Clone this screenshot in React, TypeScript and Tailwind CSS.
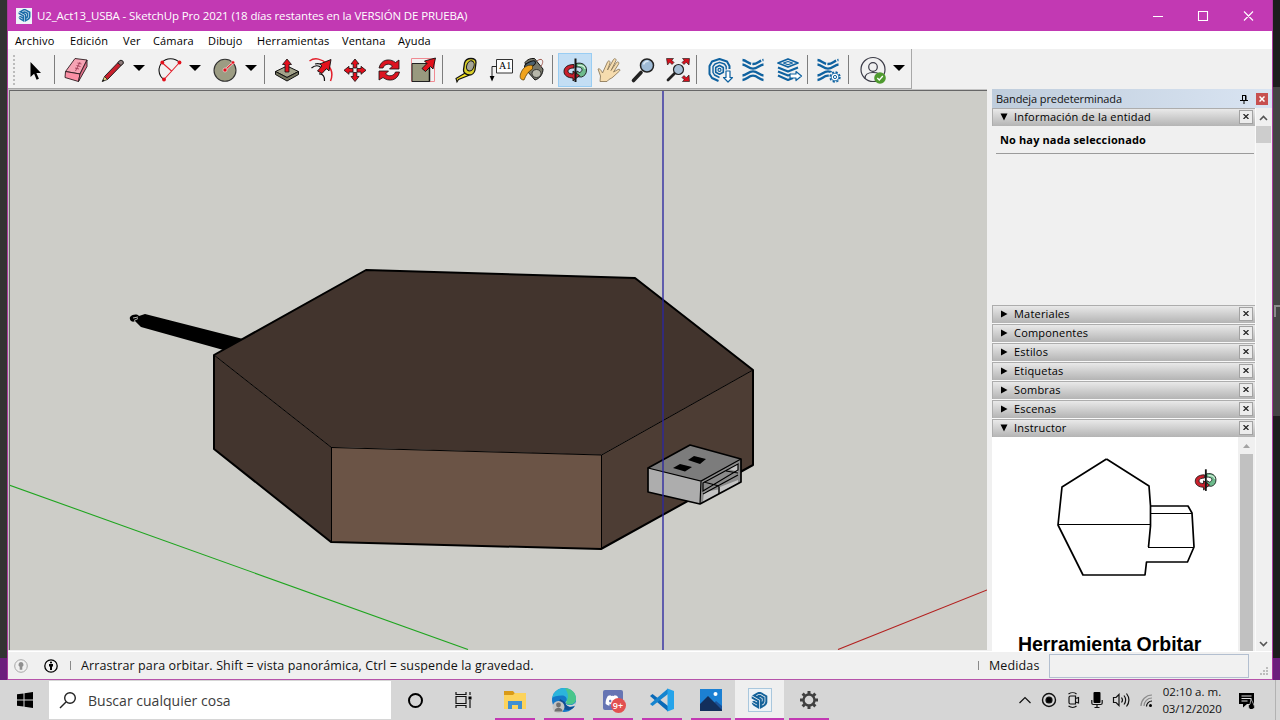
import type { ReactNode } from "react";
import { SiSketchup } from "react-icons/si";
import { FaDiscord } from "react-icons/fa";

type IconProps = { children: ReactNode; className?: string };

const Svg28 = ({ children, className = "" }: IconProps) => (
  <svg viewBox="0 0 28 28" fill="none" className={`h-7 w-7 shrink-0 ${className}`}>
    {children}
  </svg>
);

const Slot = ({ children, className }: { children?: ReactNode; className: string }) => (
  <div className={`flex h-[34px] shrink-0 items-center justify-center ${className}`}>{children}</div>
);

const Sep = ({ className }: { className: string }) => (
  <div className={`flex shrink-0 justify-center ${className}`}>
    <div className="h-[29px] w-px shrink-0 bg-[#7d7d7d]" />
  </div>
);

const Drop = () => (
  <Slot className="w-3.5 pb-1">
    <svg viewBox="0 0 12 6" className="h-[6px] w-3 shrink-0">
      <path d="M0 0h12L6 6z" />
    </svg>
  </Slot>
);

const OrbitArt = () => (
  <g stroke="#151515" strokeWidth=".9" strokeLinejoin="round">
    <path d="M15 7.500C21 6 25.500 9 25.500 14c0 4-2 6-5 7l-5.500-.5 1-5.500 2.500 1.500c1.500-.5 2.500-1.500 2.500-2.800 0-2-2.500-3-6-2.700z" fill="#6dbb8c" />
    <path d="M17 9.500c4-.5 7 1 7 3.500" stroke="#d3efdc" strokeWidth="1.200" />
    <path d="M13 8.500C7 8.500 3 11 3 15.500 3 19.500 7 22 12 22v3l6.500-5.500L12 15v3c-3 0-5-1-5-2.800S9 12 13 12z" fill="#c9202c" />
    <path d="M14.500 2.500v23.500" strokeWidth="2" />
  </g>
);

const ConvergeLines = () => (
  <g stroke="#0f62a0" strokeWidth="2.300">
    <path d="M3.500 4c4 .3 6 4 10.500 4s6.500-3.700 10.500-4" strokeDasharray="9.500 1.300" />
    <path d="M3.500 8.500c4 .3 6 4.200 10.500 4.200s6.500-3.900 10.500-4.200" />
    <path d="M3.500 19.500c4-.3 6-4.200 10.500-4.200s6.500 3.900 10.500 4.200" />
    <path d="M3.500 24c4-.3 6-4.300 10.500-4.300s6.500 4 10.500 4.300" />
  </g>
);

const Toolbar = () => (
  <div className="flex h-[40px] w-[904px] shrink-0 items-center border-r border-b border-[#a8a8a8] bg-[#f1f1f1] pt-[2px]">
    <Slot className="w-3 !justify-start pl-[5px]">
      <div className="h-[30px] w-0 border-l-2 border-dotted border-[#bcbcbc]" />
    </Slot>
    <Slot className="w-[30px]">
      <Svg28>
        <path d="M9.500 6v15l3.600-3.300 2.500 6 2.300-1-2.500-5.700h4.600z" fill="#000" />
      </Svg28>
    </Slot>
    <Sep className="w-2" />
    <Slot className="w-9">
      <Svg28>
        <g stroke="#2b1b1f" strokeWidth=".9" strokeLinejoin="round">
          <path d="M13 2.500l12 1.500-7 14-14.500-2.500z" fill="#f7a3b4" />
          <path d="M3.500 15.500L18 18l-1.500 7.500L3 21.500z" fill="#fb8fa5" />
          <path d="M25 4v6.500l-8.500 15L18 18z" fill="#e0718a" />
        </g>
        <path d="M18 6l-4.500 9M15.500 7l4 1M14.500 9.500l4 1M13 12l4 1" stroke="#a04058" strokeWidth=".9" />
      </Svg28>
    </Slot>
    <Slot className="w-[38px]">
      <Svg28>
        <path d="M5.500 20.500L20.500 5c1.500-1.500 4.500 0 3.500 2.500L8.500 23.500z" fill="#c9202c" stroke="#222" />
        <path d="M18.700 6.800L20.500 5c1.500-1.500 4.500 0 3.500 2.500L22 9.600z" fill="#8d7a7a" stroke="#222" />
        <path d="M5.500 20.500l3 3-5.300 2z" fill="#e9d37e" stroke="#222" strokeWidth=".8" />
        <path d="M3 25.800l2.700-1-1.500-1.500z" fill="#111" />
      </Svg28>
    </Slot>
    <Drop />
    <Slot className="w-[42px] pl-[6px]">
      <Svg28>
        <path d="M8 23.500C1.500 19 2 11 6 6.500C10 1.500 19 1.500 23.500 6.500" stroke="#111" strokeWidth="1.100" />
        <path d="M6 6.500l9.500 8.500M23.500 6.500L8 23.500" stroke="#e3202c" strokeWidth="1.100" />
        <g fill="#e3101c">
          <circle cx="6.300" cy="6.500" r="1.900" />
          <circle cx="23.500" cy="6.500" r="1.900" />
          <circle cx="8" cy="23.500" r="1.900" />
        </g>
      </Svg28>
    </Slot>
    <Drop />
    <Slot className="w-[42px] pl-[4px]">
      <Svg28>
        <circle cx="14" cy="14.300" r="11" fill="#9c9c83" stroke="#333" strokeWidth="1.100" />
        <path d="M14 14l8-7.500" stroke="#fff" strokeWidth="2.200" />
        <path d="M14 14l8-7.500" stroke="#e3202c" strokeWidth="1.200" />
        <g fill="#e3101c" stroke="#fff" strokeWidth=".5">
          <circle cx="14" cy="14" r="2" />
          <circle cx="22" cy="6.500" r="1.700" />
        </g>
      </Svg28>
    </Slot>
    <Drop />
    <Sep className="w-3" />
    <Slot className="w-[34px]">
      <Svg28>
        <g stroke="#111" strokeLinejoin="round">
          <path d="M2.500 15.500L14 10l11.500 5.500L14 21.500z" fill="#a3a38a" />
          <path d="M2.500 15.500v3L14 25l11.500-6.500v-3L14 21.500z" fill="#77775f" />
          <path d="M12 16V8.500H9.500L14 3l4.500 5.500H16V16z" fill="#e3101c" strokeWidth=".8" />
        </g>
      </Svg28>
    </Slot>
    <Slot className="w-[34px]">
      <Svg28>
        <path d="M2.500 5C8 1 15 3 20 8c5 5 6 11 3.500 17" stroke="#e3202c" strokeWidth="1.500" />
        <path d="M4.500 12c3-2.500 7-3 9.500-.5M12 18c4-.5 6 3 5.500 7M8 8c5-1 9 1 11 6" stroke="#111" strokeWidth="1.200" />
        <path d="M10.500 15l4.500-5-2.200-2L24 3.500l-2 11.500-2.500-2.500-4.500 5z" fill="#e3101c" stroke="#111" strokeWidth=".9" />
      </Svg28>
    </Slot>
    <Slot className="w-[34px]">
      <Svg28>
        <g fill="#e3101c" stroke="#111" strokeWidth=".8" strokeLinejoin="round">
          <path d="M14 3l4 5h-2.200v4h-3.600V8H10z" />
          <path d="M14 25.500l4-5h-2.200v-4h-3.600v4H10z" />
          <path d="M3 14.300l5-4v2.200h4v3.600H8v2.200z" />
          <path d="M25 14.300l-5-4v2.200h-4v3.600h4v2.200z" />
        </g>
      </Svg28>
    </Slot>
    <Slot className="w-[34px]">
      <Svg28>
        <g fill="#dc1420" stroke="#111" strokeWidth=".8" strokeLinejoin="round">
          <path d="M4 12C6 3 15 2 20.500 6.500L24 4v9h-9.500l3-3C14 7 9.500 8 8 12z" />
          <path d="M24.500 16c-2 9-11 10-16.500 5.500L4 24v-9h9.500l-3 3c3.500 3 8.500 2 10-2z" />
        </g>
      </Svg28>
    </Slot>
    <Slot className="w-[34px]">
      <Svg28>
        <path d="M2.500 2.500h23v23h-23z" stroke="#f08a92" />
        <path d="M3 7.500h17.500v18H3z" fill="#99997f" stroke="#222" />
        <path d="M20.500 8v17.500" stroke="#111" strokeWidth="1.500" />
        <path d="M13 12.500l5-5-2.500-2.500L26.500 2l-2.500 11-2.500-2.500-5 5z" fill="#e3101c" stroke="#111" strokeWidth=".9" />
      </Svg28>
    </Slot>
    <Sep className="w-1" />
    <Slot className="w-[44px]">
      <Svg28>
        <path d="M4 22.500l10-6 2.500 3-10 4L5 26z" fill="#f5e21f" stroke="#111" strokeWidth="1.100" />
        <path d="M12.500 7c1-3.500 3.500-4.500 6.500-4.500s5 1 5 4L23 14c-.5 3-3 5-5.500 5S11 17 11.500 14z" fill="#d9cf2a" stroke="#111" strokeWidth="1.300" />
        <ellipse cx="18.300" cy="9.800" rx="3.600" ry="5.200" transform="rotate(20 18 10)" fill="#a5a596" stroke="#111" />
      </Svg28>
    </Slot>
    <Slot className="w-[26px]">
      <div className="relative h-7 w-7 shrink-0">
        <svg viewBox="0 0 28 28" fill="none" className="h-7 w-7">
          <path d="M9.500 3.500h16v13.500h-16z" fill="#fdfdfd" stroke="#333" />
          <path d="M9.500 10.500H5v10" stroke="#222" />
          <path d="M2.700 20h4.800L5 25.500z" fill="#000" />
        </svg>
        <span className="absolute top-[4px] left-[12px] font-['Liberation_Serif',serif] text-[10px] leading-[12px] text-black">A1</span>
      </div>
    </Slot>
    <Slot className="w-9">
      <Svg28>
        <path d="M7 6.500c2-3 6-4.500 9.500-4L25 13c0 5-3 9.500-8 11L9 15z" fill="#77776a" stroke="#111" />
        <ellipse cx="12" cy="8.500" rx="2.600" ry="6" transform="rotate(62 12 8.500)" fill="#4c6170" stroke="#111" />
        <path d="M14.500 9.500C9 8 4.500 12 2.500 18c-1 3.500 0 6 3.500 6 2-5 4.500-9 8.500-11z" fill="#f0a31e" stroke="#4a3200" strokeWidth=".7" />
        <path d="M19 5c5-4 8 0 3.500 6" stroke="#a05a50" />
        <ellipse cx="18.500" cy="17.500" rx="4.500" ry="4" fill="#b7b7aa" stroke="#222" strokeWidth=".8" />
      </Svg28>
    </Slot>
    <Sep className="w-1" />
    <Slot className="ml-1 w-[34px] border border-[#99cdf3] bg-[#c3def4]">
      <Svg28>
        <OrbitArt />
      </Svg28>
    </Slot>
    <Slot className="w-[34px]">
      <Svg28>
        <path
          d="M5 25.500l.5-5.500-2.500-7c1.500-1 3.500 1.500 4.500 4l5-11c1-2 3-1 2.500 1L12.500 14l6-10.500c1-1.700 3-.5 2.500 1L16 14.500l5.500-8c1.500-1.500 3 0 2 1.700L18.500 16l4.500-2.500c1.500-1 2.500.5 1.500 1.500L18 21c-2 2-4 1.500-6 4.500z"
          fill="#f6dcae"
          stroke="#8f7c5c"
          strokeWidth=".9"
        />
      </Svg28>
    </Slot>
    <Slot className="w-[34px]">
      <Svg28>
        <path d="M4.500 24.500L12 16.500" stroke="#222" strokeWidth="3.600" strokeLinecap="round" />
        <circle cx="18" cy="9.500" r="6.500" fill="#9fbbd6" stroke="#222" strokeWidth="1.500" />
        <path d="M14.500 8.500c1-2.500 3-3.500 5-3" stroke="#dbe8f4" strokeWidth="1.500" />
      </Svg28>
    </Slot>
    <Slot className="w-[34px] pl-0.5">
      <Svg28>
        <path d="M4 24l6.500-6.500" stroke="#222" strokeWidth="2.800" strokeLinecap="round" />
        <circle cx="14.500" cy="13.500" r="5" fill="#a6bfd6" stroke="#222" strokeWidth="1.200" />
        <g fill="#d5121e" stroke="#111" strokeWidth=".6">
          <path d="M2.500 2.500h7L7.800 4.300 10 6.500 8 8.500 5.800 6.300 3.500 9z" />
          <path d="M25.500 2.500h-7l1.700 1.800L18 6.500l2 2 2.200-2.200L25 9z" />
          <path d="M25.500 25.500h-7l1.700-1.800-2.200-2.200 2-2 2.200 2.200L25 19z" />
        </g>
      </Svg28>
    </Slot>
    <Sep className="w-1" />
    <Slot className="w-[39px] pl-[5px]">
      <Svg28>
        <g stroke="#0f62a0" strokeLinejoin="round">
          <path d="M12.500 25L6 22 3.500 18v-8L6 5.500 13.500 3l7.500 2.500 2.500 4.500v3" strokeWidth="2" />
          <path d="M13.500 21.500L8.500 19 7 16.500v-6L9 8l4.500-1.700L18.500 8l1.700 2.500v3" strokeWidth="1.400" />
          <path d="M13.500 9.500l3.800 2v4.800l-3.800 2-3.800-2v-4.800z" strokeWidth="1.600" />
          <circle cx="13.500" cy="13.900" r="1.500" strokeWidth="1.200" />
          <path d="M20 15h4v6.500h2.500L22 26l-4.500-4.500H20z" fill="#fff" strokeWidth="1.200" />
        </g>
      </Svg28>
    </Slot>
    <Slot className="w-8">
      <Svg28>
        <ConvergeLines />
      </Svg28>
    </Slot>
    <Slot className="w-9 pl-[4px]">
      <Svg28>
        <g stroke="#0f62a0" strokeLinejoin="round">
          <path d="M3 7L13 3l10 4-10 4z" strokeWidth="1.800" />
          <path d="M8.500 7l4.500-1.500L17.500 7 13 8.700z" strokeWidth="1.200" />
          <path d="M3 11.500l10 4 10-4M3 15.500l10 4 3-1M3 19.500l10 4.500 5-2" strokeWidth="2" />
          <path d="M15 18h6v-2.500l5.500 4.500-5.500 4.500V22h-6z" fill="#fff" strokeWidth="1.200" />
        </g>
      </Svg28>
    </Slot>
    <Sep className="w-1" />
    <Slot className="w-[38px] pl-0.5">
      <Svg28>
        <g transform="translate(-1 0)">
          <ConvergeLines />
        </g>
        <circle cx="20" cy="21" r="6.300" fill="#f1f1f1" />
        <circle cx="20" cy="21" r="4.900" fill="#fff" stroke="#0f62a0" strokeWidth="1.600" strokeDasharray="2.200 1.650" />
        <circle cx="20" cy="21" r="3.900" fill="#fff" stroke="#0f62a0" strokeWidth=".9" />
        <circle cx="20" cy="21" r="1.600" fill="#fff" stroke="#0f62a0" strokeWidth="1" />
      </Svg28>
    </Slot>
    <Sep className="w-0.5" />
    <Slot className="w-[43px] pl-[4px]">
      <Svg28>
        <g stroke="#3c3c48" strokeWidth="1.200">
          <circle cx="14" cy="13.500" r="12" />
          <circle cx="14" cy="11" r="4.300" />
          <path d="M6 22.500c0-4 3-6 8-6s8 2 8 5" />
        </g>
        <circle cx="21" cy="22" r="5.800" fill="#4f9a2f" />
        <path d="M18.300 22l2 2 3.500-4" stroke="#fff" strokeWidth="1.300" />
      </Svg28>
    </Slot>
    <Drop />
  </div>
);

const Viewport = () => (
  <div className="h-[561px] w-[979px] shrink-0 bg-[#c4c4c4] pt-px pl-px">
    <div className="h-[560px] w-[978px] border-t border-l border-[#676767] bg-[#cdcdc8]">
      <svg viewBox="10 91 977 559" preserveAspectRatio="none" className="block h-[559px] w-[977px]" fill="none">
        <path d="M9 485L468 649.500" stroke="#1fa51f" strokeWidth="1.100" />
        <path d="M838 649.500L987 590" stroke="#b3201f" strokeWidth="1.100" />
        <path d="M145 314l98 25-16 12-86-24-6-6c-3 2-6-1-5-4 3-3 7-3 9-1z" fill="#000" />
        <path d="M133 318l5-1M134 320.500l4-2" stroke="#cdcdc8" strokeWidth=".9" />
        <path d="M214 355L331 447V542L214 449z" fill="#43352e" />
        <path d="M331 447L601 455V549L331 542z" fill="#6b5446" />
        <path d="M601 455L753 370V465L601 549z" fill="#4d3d34" />
        <path d="M366 270L635 278L753 370L601 455L331 447L214 355z" fill="#42342d" />
        <path d="M214 355L331.500 447.500L601.500 455L753 370M331.500 447V542M601.500 455V549" stroke="#000" strokeWidth="1" />
        <path d="M366 270L635 278L753 370V465L601 549L331 542L214 449V355z" stroke="#000" strokeWidth="2" strokeLinejoin="round" />
        <path d="M648 468L690 445L741 459L701 481z" fill="#7c7c7c" />
        <path d="M648 468L701 481L700 504L648 492z" fill="#adadad" />
        <path d="M701 481L741 459V482L700 504z" fill="#8b8b8b" />
        <path d="M704 492l14-2.500V496l-15 6zM720 487l18-7v3.500l-18 9zM728 469l10-6v8.500z" fill="#c4c4c4" />
        <path d="M673 468l7-4 12 3-7 4.500zM688 460l6-4 12 3-6 5z" fill="#000" />
        <path d="M648 468L701 481L741 459M701 481L700 504" stroke="#000" strokeWidth="1.200" />
        <path d="M703 483L738 464V470L703 491zM703 494L738 475M719 486.500V494M726 471L738 473M704 482l15 4" stroke="#000" strokeWidth="1.200" />
        <path d="M648 468L690 445L741 459V482L700 504L648 492z" stroke="#000" strokeWidth="1.700" strokeLinejoin="round" />
        <path d="M663 90V650" stroke="#2b27a0" strokeWidth="1.600" opacity=".85" />
      </svg>
    </div>
  </div>
);

const CloseBox = () => (
  <div className="mr-[2px] flex h-3.5 w-3.5 items-center justify-center border border-[#a2a2a2] bg-[#ececec]">
    <svg viewBox="0 0 6 5" className="h-[5px] w-[6px]" stroke="#222" strokeWidth="1.200">
      <path d="M.5 0l5 5M5.500 0l-5 5" />
    </svg>
  </div>
);

const PanelHeader = ({ title, open = false }: { title: string; open?: boolean }) => (
  <div className="flex h-[18px] shrink-0 items-center border-t border-l border-[#adadad] bg-linear-to-b from-[#e9e9e9] to-[#b4b4b4] pb-[2px]">
    <svg viewBox="0 0 8 8" className="ml-[7px] h-2 w-2">
      {open ? <path d="M.5 .5h7L4 7.500z" /> : <path d="M1 .5v7L7.500 4z" />}
    </svg>
    <span className="ml-1.5 flex-1 font-['Open_Sans',sans-serif] text-[11px] leading-4 tracking-[0.2px] text-black">{title}</span>
    <CloseBox />
  </div>
);

const closedPanels = ["Materiales", "Componentes", "Estilos", "Etiquetas", "Sombras", "Escenas"];

const Tray = () => (
  <div className="ml-[5px] flex h-[563px] w-[280px] shrink-0 flex-col">
    <div className="flex h-[19px] shrink-0 items-center bg-linear-to-r from-[#bfcddc] to-[#d9e4f2] pt-px pl-1">
      <span className="flex-1 font-['Open_Sans',sans-serif] text-[11px] tracking-[-0.1px] text-[#111]">Bandeja predeterminada</span>
      <svg viewBox="0 0 8 9" className="mr-[8px] h-[9px] w-2" fill="none" stroke="#000">
        <path d="M2 .5h4v5M2.500 .5v5M5.500 .5v5M0 5.500h8M4 5.500V9" />
      </svg>
      <div className="mr-[4px] flex h-3 w-3 items-center justify-center bg-[#c75050]">
        <svg viewBox="0 0 6 6" className="h-1.5 w-1.5" stroke="#fff" strokeWidth="1.500">
          <path d="M.5 .5l5 5M5.500 .5l-5 5" />
        </svg>
      </div>
    </div>
    <div className="flex h-[544px] shrink-0">
      <div className="flex w-[263px] shrink-0 flex-col">
        <PanelHeader title="Información de la entidad" open />
        <div className="h-[179px] shrink-0 px-1">
          <div className="h-7 w-[258px] border-b border-[#9b9b9b] pt-1.5 pl-1 font-['Open_Sans',sans-serif] text-[11px] leading-4 font-bold tracking-[0.13px] whitespace-nowrap text-black">
            No hay nada seleccionado
          </div>
        </div>
        <div className="flex flex-col gap-px bg-[#f8f8f8]">
          {closedPanels.map((title) => (
            <PanelHeader key={title} title={title} />
          ))}
          <PanelHeader title="Instructor" open />
        </div>
        <div className="flex h-[215px] shrink-0 overflow-hidden">
          <div className="flex w-[246px] flex-col bg-white">
            <svg viewBox="992 437 246 199" className="h-[199px] w-[246px] shrink-0" fill="none" stroke="#000">
              <path
                d="M1106.500 459L1149 486l1.500 20v20l-2 21M1106.500 459L1062 487l-4 38 25 50h62l1.500-13h41l6.500-15-2-34-4-7h-37.500"
                strokeWidth="1.700"
                strokeLinejoin="round"
              />
              <path d="M1058 524.500h92M1150 513.500h42M1148 547.500h46" />
              <g transform="translate(1192.500 467) scale(.92)">
                <OrbitArt />
              </g>
            </svg>
            <div className="pl-[26px] font-['Liberation_Sans',sans-serif] text-[19.500px] leading-4 font-bold tracking-[-0.05px] whitespace-nowrap text-black">
              Herramienta Orbitar
            </div>
          </div>
          <div className="flex w-[17px] flex-col bg-[#f0f0f0] pl-0.5">
            <svg viewBox="0 0 13 17" className="h-[17px] w-[13px] shrink-0">
              <path d="M3 11h7L6.500 7z" fill="#a3a3a3" />
            </svg>
            <div className="w-[13px] flex-1 bg-[#c1c1c1]" />
          </div>
        </div>
      </div>
      <div className="flex w-[17px] flex-col border-l border-[#fafafa] bg-[#f0f0f0]">
        <svg viewBox="0 0 16 18" className="h-[18px] w-4 shrink-0" fill="none" stroke="#555" strokeWidth="1.600">
          <path d="M4 12L7.500 8.500l3.500 3.500" />
        </svg>
        <div className="h-[17px] w-[15px] shrink-0 bg-[#cdcdcd]" />
        <svg viewBox="0 0 16 18" className="mt-auto h-[18px] w-4 shrink-0" fill="none" stroke="#555" strokeWidth="1.600">
          <path d="M4 8l3.500 3.500L11 8" />
        </svg>
      </div>
    </div>
  </div>
);

const menus = [
  ["Archivo", "w-[55px]"],
  ["Edición", "w-[53px]"],
  ["Ver", "w-[30px]"],
  ["Cámara", "w-[55px]"],
  ["Dibujo", "w-[49px]"],
  ["Herramientas", "w-[85px]"],
  ["Ventana", "w-[56px]"],
  ["Ayuda", "w-[50px]"],
];

const StatusBar = () => (
  <div className="flex h-[28px] items-center border-t border-white bg-[#f0f0f0] font-['Open_Sans',sans-serif] text-[12.500px] whitespace-nowrap text-[#111]">
    <svg viewBox="0 0 14 14" className="ml-[6px] h-3.5 w-3.5" fill="none">
      <circle cx="7" cy="7" r="6.300" stroke="#a8a8a8" />
      <path d="M7 3a2.600 2.600 0 0 1 1.300 4.800v3H5.700v-3A2.600 2.600 0 0 1 7 3z" fill="#8f8f8f" />
    </svg>
    <svg viewBox="0 0 14 14" className="ml-[16px] h-3.5 w-3.5" fill="none">
      <circle cx="7" cy="7" r="6.200" stroke="#000" strokeWidth="1.300" />
      <path d="M5 5h4v2.500H8V11H6V7.500H5z" fill="#000" />
      <circle cx="7" cy="3.500" r="1.100" fill="#000" />
    </svg>
    <div className="ml-[12px] h-[9px] w-px bg-[#8a8a8a]" />
    <span className="ml-[10px] w-[897px] pt-px tracking-[0.12px]">Arrastrar para orbitar. Shift = vista panorámica, Ctrl = suspende la gravedad.</span>
    <div className="h-[9px] w-px bg-[#8a8a8a]" />
    <span className="ml-[10px] w-[60px] pt-px tracking-[0.12px]">Medidas</span>
    <div className="h-6 w-[200px] border border-[#b3bfd0] bg-[#f1f1f1]" />
    <svg viewBox="0 0 9 9" className="mt-3 ml-[11px] h-[9px] w-[9px]" fill="#bdbdbd">
      <path d="M6 0h2v2H6zM3 3h2v2H3zM6 3h2v2H6zM0 6h2v2H0zM3 6h2v2H3zM6 6h2v2H6z" />
    </svg>
  </div>
);

const App24 = ({ children, active = false, wide = "w-10" }: { children: ReactNode; active?: boolean; wide?: string }) => (
  <div className={`flex h-10 w-[49px] shrink-0 flex-col items-center ${active ? "bg-[#efefef]" : ""}`}>
    <div className="flex h-[37px] items-center justify-center pt-[3px]">{children}</div>
    <div className={`mt-auto h-[2px] bg-[#c239b3] ${wide}`} />
  </div>
);

const Taskbar = () => (
  <div className="flex h-10 w-[1280px] items-center bg-[#d6d6d6] font-['Open_Sans',sans-serif]">
    <div className="flex w-[49px] justify-center">
      <svg viewBox="0 0 16 16" className="h-4 w-4">
        <path d="M0 2.300L6.500 1.400V7.500H0zM7.500 1.200L16 0v7.500H7.500zM0 8.500h6.500v6.100L0 13.700zM7.500 8.500H16V16l-8.500-1.200z" />
      </svg>
    </div>
    <div className="flex h-[38px] w-[342px] items-center bg-white">
      <svg viewBox="0 0 18 18" className="ml-[10px] h-[18px] w-[18px]" fill="none" stroke="#222" strokeWidth="1.400">
        <circle cx="11" cy="7" r="5.300" />
        <path d="M7 11L1 17" />
      </svg>
      <span className="ml-[11px] text-[14px] tracking-[0.02px] whitespace-nowrap text-[#3c3c3c]">Buscar cualquier cosa</span>
    </div>
    <div className="flex w-[49px] justify-center">
      <div className="h-[15px] w-[15px] rounded-full border-2 border-black" />
    </div>
    <div className="flex w-[50px] justify-center pr-1">
      <svg viewBox="0 0 17 16" className="h-4 w-[17px]" fill="none" stroke="#111" strokeWidth="1.200">
        <path d="M1 0v2.500h10V0M1 4.500h10v7H1zM1 16v-2.500h10V16M15 0v3M15 8v8" />
        <path d="M13.500 4.500h3v3h-3z" fill="#000" stroke="none" />
      </svg>
    </div>
    <App24>
      <svg viewBox="0 0 24 22" className="h-[22px] w-6">
        <path d="M1 2h9l2 2.500v4H1z" fill="#d99a17" />
        <path d="M1 6h9l2-2h11v16H1z" fill="#fcd35c" />
        <path d="M5 12h14v8h-4v-4H9v4H5z" fill="#3f8fd2" />
      </svg>
    </App24>
    <App24>
      <svg viewBox="0 0 26 26" className="h-[26px] w-[26px]">
        <circle cx="13" cy="13" r="12" fill="#1478c8" />
        <path d="M1.200 11C2.500 4 8 1 13 1c7 0 12 5 12 10.500 0 4-3 6-6.500 6-3 0-4.500-1.500-3-3.500 1-3-1-5.500-4.500-5.500C6 8.500 2.500 9.500 1.200 11z" fill="#2bb5dc" />
        <path d="M14 1c7 .5 11 5.500 11 10.500 0 4-3 6-6.500 6-3 0-4.500-1.500-3-3.500 3-4 1-9-1.500-13z" fill="#55cc70" opacity=".75" />
        <path d="M15.500 14c-2 2-.5 4 3.500 4 2 0 4-.5 6-3-.5 2-1 3-1.500 4l-5 1-4-2z" fill="#d6d6d6" />
        <path d="M9 12c-2 5 1 10 7 11 3 .5 6-1 8-4-4 2-9 1-10-4z" fill="#0f4d93" />
        <circle cx="7.500" cy="20" r="6" fill="#c4c4c4" />
        <circle cx="7.500" cy="18" r="2.400" fill="#707070" />
        <path d="M3.500 24.500c0-5 8-5 8 0z" fill="#707070" />
      </svg>
    </App24>
    <App24>
      <div className="relative flex h-6 w-6 items-center justify-center">
        <div className="flex h-5 w-5 items-center justify-center rounded-[2px] bg-[#6675b3] text-white">
          <FaDiscord size={15} />
        </div>
        <div className="absolute top-[10px] left-[10px] flex h-[15px] w-[15px] items-center justify-center rounded-full bg-[#e25050] text-[9px] leading-none font-semibold text-white">9+</div>
      </div>
    </App24>
    <App24>
      <svg viewBox="0 0 24 24" className="h-6 w-6">
        <path d="M0 8l2.500-2L18 18v5.500z" fill="#0a6ab8" />
        <path d="M0 16l2.500 2L18 6V.5z" fill="#1584cf" />
        <path d="M17.500 .5L24 3v18l-6.500 2.500z" fill="#26a4ea" />
      </svg>
    </App24>
    <App24>
      <svg viewBox="0 0 22 22" className="h-[22px] w-[22px]">
        <path d="M0 0h22v22H0z" fill="#1c80d3" />
        <path d="M11 17l5-5 6 5v5H11z" fill="#1b529a" />
        <path d="M0 15l8-8 14 14v1H0z" fill="#132f5c" />
        <circle cx="15.500" cy="5" r="2" fill="#fff" />
      </svg>
    </App24>
    <App24 active wide="w-[49px]">
      <div className="flex h-6 w-6 items-center justify-center border border-[#a9c7dd] bg-[#eef3f7] text-[#14629a]">
        <SiSketchup size={17} />
      </div>
    </App24>
    <App24>
      <svg viewBox="0 0 20 20" className="h-5 w-5" fill="none" stroke="#404040">
        <circle cx="10" cy="10" r="5.500" strokeWidth="2.400" />
        <path d="M10 1v3M10 16v3M1 10h3M16 10h3M3.600 3.600l2.200 2.200M14.200 14.200l2.200 2.200M3.600 16.400l2.200-2.200M14.200 5.800l2.200-2.200" strokeWidth="3" />
      </svg>
    </App24>
    <div className="ml-auto flex h-10 w-[268px] shrink-0 items-center">
      <svg viewBox="0 0 148 22" className="h-[22px] w-[148px] shrink-0" fill="none" stroke="#111" strokeWidth="1.200">
        <path d="M7.500 14L13 8.500l5.500 5.500" />
        <circle cx="37" cy="11" r="6.500" strokeWidth="1.400" />
        <circle cx="37" cy="11" r="3" fill="#000" />
        <path d="M57 8.500c0-1 .5-1.500 1.500-1.500h5v8h-5c-1 0-1.500-.5-1.500-1.500zM63.500 9.500l3-1v5.500l-3-1M56.500 5c2.500-1.700 6-1.700 8 0M56.500 17c2.500 1.700 6 1.700 8 0" />
        <rect x="81.500" y="3" width="7" height="11" rx="1" fill="#000" stroke="none" />
        <path d="M79.800 11v3c0 1 .7 1.500 1.500 1.500h7.400c.8 0 1.500-.5 1.500-1.500v-3M85 15.500V19M82.500 18.500h5" />
        <path d="M101.500 8.500h2.500l3-3v11l-3-3h-2.500zM109.500 8.500c1.200 1.500 1.200 3.500 0 5M112 6.500c2.200 3 2.200 6 0 9M114.500 4.500c3 4 3 9 0 13" />
        <path d="M129 17C129 11 134 6 140 6M132 17c0-4.500 3.500-8 8-8" stroke="#8b8b8b" />
        <path d="M134.500 17.500c0-3 2.500-5.500 5.500-5.500" />
        <circle cx="138.500" cy="16.500" r="1.500" fill="#000" stroke="none" />
      </svg>
      <div className="flex w-[64px] flex-col items-center text-[11.500px] leading-[17px] whitespace-nowrap text-[#111]">
        <span>02:10 a. m.</span>
        <span className="tracking-[-0.2px]">03/12/2020</span>
      </div>
      <svg viewBox="0 0 18 18" className="ml-[14px] h-[18px] w-[18px]">
        <path d="M1 2h15v11H9l-4 3.500V13H1z" />
        <path d="M3.500 5h10M3.500 7.500h10M3.500 10h6" stroke="#ddd" strokeWidth="1.100" />
        <path d="M13 8l3 6a3 3 0 1 1-4-1z" stroke="#ddd" strokeWidth=".7" />
      </svg>
      <div className="mr-[4px] ml-auto h-10 w-px bg-[#b2b2b2]" />
    </div>
  </div>
);

export default function App() {
  return (
    <div className="flex h-[720px] w-[1280px] flex-col overflow-hidden bg-[#f0f0f0]">
      <div className="flex h-[680px] shrink-0">
        <div className="flex w-[8px] shrink-0 flex-col border-r border-[#a93a9c] bg-[#333333]">
          <div className="mt-auto h-[22px] bg-[#6c1f7c]" />
        </div>
        <div className="flex w-[1264px] shrink-0 flex-col border-b border-[#b653aa] bg-[#f0f0f0]">
          <div className="flex h-[31px] shrink-0 items-center bg-[#c239b3] text-white">
            <div className="ml-2 flex h-4 w-4 items-center justify-center bg-[#eef3f8] text-[#1a6ca8]">
              <SiSketchup size={13} />
            </div>
            <span className="ml-[5px] flex-1 font-['Open_Sans',sans-serif] text-[11.500px] tracking-[-0.13px] whitespace-nowrap">
              U2_Act13_USBA - SketchUp Pro 2021 (18 días restantes en la VERSIÓN DE PRUEBA)
            </span>
            <svg viewBox="0 0 110 12" className="mr-[13px] h-3 w-[110px]" fill="none" stroke="#fff" strokeWidth="1.100">
              <path d="M4 6.500h10M49.500 1.500h9v9h-9zM95 1.500l9 9M104 1.500l-9 9" />
            </svg>
          </div>
          <div className="flex h-[18px] shrink-0 items-center bg-white pl-[7px] font-['Open_Sans',sans-serif] text-[11px] tracking-[0.15px] text-black">
            {menus.map(([label, width]) => (
              <span key={label} className={`shrink-0 pt-[2px] ${width}`}>
                {label}
              </span>
            ))}
          </div>
          <div className="-mb-px shrink-0">
            <Toolbar />
          </div>
          <div className="flex h-[563px] shrink-0 items-start pt-px">
            <Viewport />
            <Tray />
          </div>
          <StatusBar />
        </div>
        <div className="flex w-2 shrink-0 flex-col border-l border-[#a93a9c] bg-[#1d1d1d]">
          <div className="mt-[87px] flex h-[329px] items-start bg-[#444444] pt-[218px]">
            <div className="ml-px h-3 w-1.5 border-t-2 border-l-2 border-[#8b8b8b]" />
          </div>
          <div className="mt-auto h-[22px] bg-[#6c1f7c]" />
        </div>
      </div>
      <Taskbar />
    </div>
  );
}
